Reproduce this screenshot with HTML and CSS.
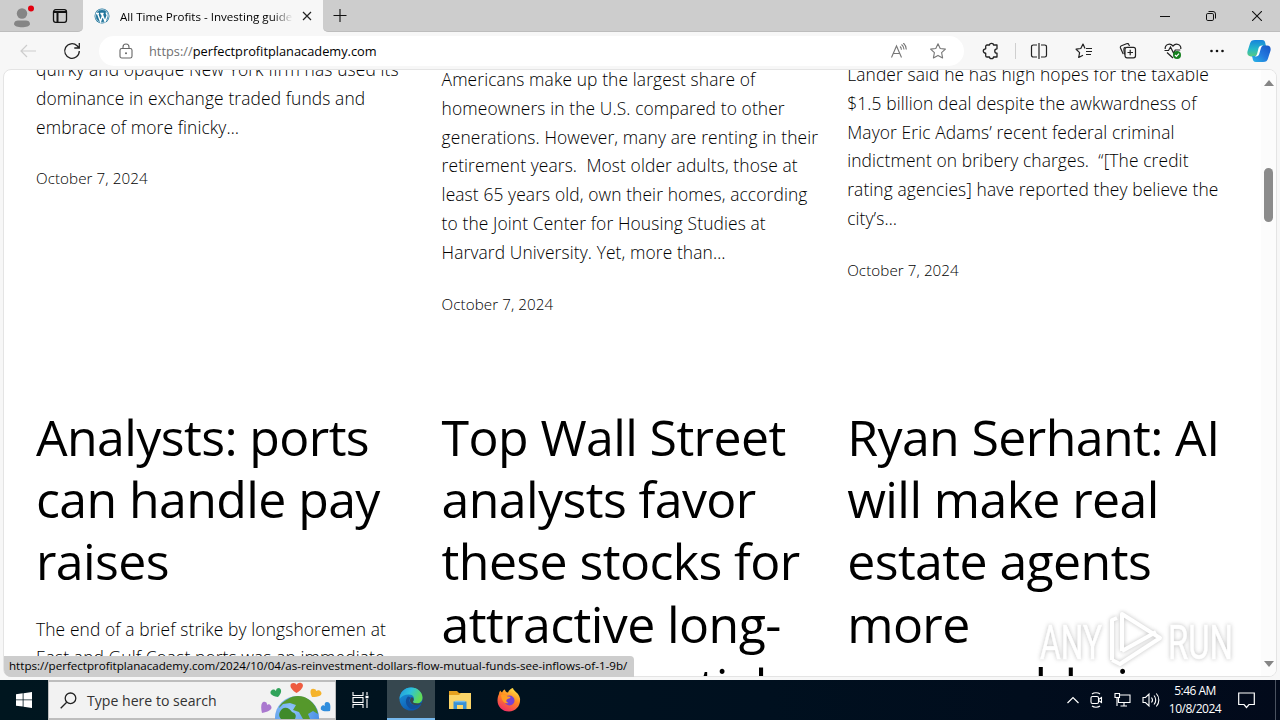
FILE: index.html
```html
<!DOCTYPE html>
<html lang="en">
<head>
  <meta charset="UTF-8">
  <meta name="viewport" content="width=device-width, initial-scale=1.0">
  <title>All Time Profits - Investing guide</title>
  <link rel="stylesheet" href="styles.css">
</head>
<body>
  <div class="desktop">
    <header class="titlebar">
      <div class="corner">
        <svg class="profile" width="24" height="28" viewBox="0 0 24 28">
          <circle cx="12" cy="11.500" r="5.200" fill="#858585"/>
          <path d="M4 22c0-2.500 2-3.500 4-3.500h8c2 0 4 1 4 3.500 0 2-4 3.300-8 3.300S4 24 4 22z" fill="#858585"/>
          <circle cx="21" cy="6.500" r="3" fill="#e3000f"/>
        </svg>
        <svg class="tabs-icon" width="16" height="16" viewBox="0 0 16 16" fill="none" stroke="#111" stroke-width="1.300">
          <rect x="1.500" y="1.700" width="13" height="12.600" rx="2.200"/>
          <path d="M1.500 4h13M5.500 4v10" stroke-width="2"/>
        </svg>
      </div>
      <div class="tab">
        <svg width="16" height="16" viewBox="0 0 16 16">
          <circle cx="8" cy="8" r="7.500" fill="#21759b"/>
          <circle cx="8" cy="8" r="6.500" fill="none" stroke="#d8e8f0" stroke-width=".7"/>
          <path d="M2 5.500h3M6.300 5.500h3.400M3.500 5.500l3 8 1.900-5.400-1-2.600M8 5.500l3 8 2-5.500c.5-1.500-.6-2.500-.9-3.500" fill="none" stroke="#fff" stroke-width="1.400"/>
        </svg>
        <span class="tab-title">All Time Profits - Investing guide</span>
        <svg class="tab-close" width="10" height="10" viewBox="0 0 10 10" stroke="#222" stroke-width="1.200"><path d="M1 1l8 8M9 1L1 9"/></svg>
      </div>
      <svg class="new-tab" width="14" height="14" viewBox="0 0 14 14" stroke="#111" stroke-width="1.200"><path d="M7 0v14M0 7h14"/></svg>
      <div class="window-buttons">
        <svg width="10" height="10" viewBox="0 0 10 10" stroke="#111"><path d="M0 5.500h10"/></svg>
        <svg width="10" height="10" viewBox="0 0 10 10" fill="none" stroke="#111"><rect x=".5" y="2.500" width="7" height="7" rx="1.300"/><path d="M2.500.5h4.500a2.500 2.500 0 0 1 2.500 2.500v4.500"/></svg>
        <svg width="10" height="10" viewBox="0 0 10 10" stroke="#111" stroke-width="1.100"><path d="M0 0l10 10M10 0L0 10"/></svg>
      </div>
    </header>

    <nav class="toolbar">
      <svg class="back" width="16" height="14" viewBox="0 0 16 14" fill="none" stroke="#cdcdcd" stroke-width="1.200"><path d="M16 7H1M7 1L1 7l6 6"/></svg>
      <svg class="reload" width="18" height="18" viewBox="0 0 18 18" fill="none" stroke="#222" stroke-width="1.300"><path d="M16.300 9a7.300 7.300 0 1 1-2.200-5.200L16 5.700M16.300 1v5h-5"/></svg>
      <div class="address">
        <svg class="lock" width="14" height="16" viewBox="0 0 14 16" fill="none" stroke="#666" stroke-width="1.100"><rect x="1" y="5.500" width="12" height="9.500" rx="1.800"/><path d="M4 5.500V4a3 3 0 0 1 6 0v1.500"/><circle cx="7" cy="10.200" r="1" fill="#666" stroke="none"/></svg>
        <span class="url"><span class="scheme">https://</span>perfectprofitplanacademy.com</span>
        <svg class="read" width="18" height="16" viewBox="0 0 18 16" fill="none" stroke="#777" stroke-width="1.100"><path d="M1.500 14.500L6.500 3l5 11.500M3.200 10.500h6.600M10 3.500c1 .8 1.400 2 1.400 3.300M11.500 1.500c1.600 1.200 2.500 3 2.500 5M13.300 0c2 1.700 3 4 3 6.500"/></svg>
        <svg class="star" width="18" height="18" viewBox="0 0 18 18" fill="none" stroke="#777" stroke-width="1.100" stroke-linejoin="round"><path d="M9 1.700l2.200 4.800 5.200.6-3.800 3.600 1 5.200L9 13.400l-4.600 2.500 1-5.200L1.600 7.100l5.200-.6z"/></svg>
      </div>
      <div class="tools">
        <svg class="puzzle" width="18" height="18" viewBox="0 0 18 18" fill="none" stroke="#222" stroke-width="1.300" stroke-linejoin="round"><path d="M5 3h2.500c0-2.300 4-2.300 4 0H15v3.800c-3 0-3 4.400 0 4.400V15h-3.500c0 2.200-4 2.200-4 0H5a1.300 1.300 0 0 1-1.300-1.300v-2.500c-3.200 0-3.200-4.400 0-4.400V4.300A1.300 1.300 0 0 1 5 3z"/></svg>
        <span class="divider"></span>
        <svg width="18" height="18" viewBox="0 0 18 18" fill="none" stroke="#222" stroke-width="1.200"><path d="M9 1v16M7 3H3.200A1.700 1.700 0 0 0 1.500 4.700v8.600A1.700 1.700 0 0 0 3.200 15H7M11 3h3.800a1.700 1.700 0 0 1 1.700 1.700v8.600a1.700 1.700 0 0 1-1.700 1.700H11"/></svg>
        <svg width="18" height="18" viewBox="0 0 18 18" fill="none" stroke="#222" stroke-width="1.200" stroke-linejoin="round"><path d="M10 6.500L8 2 5.800 6.500l-4.700.7 3.500 3.400-.9 4.900L8 13.200M11 6.500h6M11 9.500h6M11 12.500h5"/></svg>
        <svg width="18" height="18" viewBox="0 0 18 18" fill="none" stroke="#222" stroke-width="1.200"><path d="M4.200 12L1.500 6c-.4-1 0-1.900 1-2.300l5-2c1-.4 2 0 2.400 1L10.500 4"/><path d="M5.500 12.500l-.6-5C4.800 6 5.500 5.300 6.500 5.300"/><rect x="6" y="5.300" width="10.500" height="10.500" rx="2"/><path d="M11.200 7.800v5.500M8.500 10.500H14"/></svg>
        <svg width="18" height="18" viewBox="0 0 18 18" fill="none" stroke="#222" stroke-width="1.200"><path d="M1.200 7C.8 2.500 6 .5 9 4c3-3.500 8.300-1.500 7.800 3M3 10.500l6 5.500M.5 8.500h4L6.500 5l3 6 1.800-3h5"/><circle cx="13" cy="13" r="4" fill="#16801f" stroke="none"/><path d="M11 13l1.400 1.400 2.600-2.800" stroke="#fff"/></svg>
        <svg class="more" width="18" height="18" viewBox="0 0 18 18" fill="#111"><circle cx="3.500" cy="9" r="1.300"/><circle cx="9" cy="9" r="1.300"/><circle cx="14.500" cy="9" r="1.300"/></svg>
        <svg class="copilot" width="24" height="24" viewBox="0 0 24 24">
          <defs>
            <linearGradient id="cpA" x1="0" y1="0" x2="0" y2="1"><stop offset="0" stop-color="#1683dc"/><stop offset=".55" stop-color="#26b8c8"/><stop offset="1" stop-color="#58ca82"/></linearGradient>
            <linearGradient id="cpB" x1="1" y1="0" x2="0" y2="1"><stop offset="0" stop-color="#1554c6"/><stop offset=".5" stop-color="#2378dd"/><stop offset="1" stop-color="#28b8e7"/></linearGradient>
          </defs>
          <path d="M8 1h7c2.500 0 3 1.500 3.500 4l.5 2h-3c-2 0-2.800 1-3.300 3l-1.500 5c-.6 1.800-1.500 2.500-3.200 2.500H4C.8 17.500-.2 15 .6 12L3 4.500C3.700 2 5 1 8 1z" fill="url(#cpA)"/>
          <path d="M16 23H9c-2.500 0-3-1.500-3.500-4L5 17h3c2 0 2.800-1 3.300-3l1.500-5c.6-1.800 1.500-2.500 3.200-2.500h4c3.200 0 4.200 2.500 3.400 5.500L21 19.500c-.7 2.500-2 3.500-5 3.500z" fill="url(#cpB)"/>
          <path d="M11.500 9.200c.6-1.900 1.700-2.700 3.300-2.700h1.500c-1.500.4-2 1.500-2.500 3l-1.500 5.300c-.6 1.900-1.700 2.700-3.300 2.700H7.700c1.500-.4 2-1.500 2.500-3z" fill="#fff"/>
        </svg>
      </div>
    </nav>

    <main class="viewport">
      <section class="posts posts-top">
        <article class="post">
          <p>quirky and opaque New York firm has used its<br>dominance in exchange traded funds and<br>embrace of more finicky…</p>
          <time>October 7, 2024</time>
        </article>
        <article class="post post-mid">
          <p>Americans make up the largest share of<br>homeowners in the U.S. compared to other<br>generations. However, many are renting in their<br>retirement years. &nbsp;Most older adults, those at<br>least 65 years old, own their homes, according<br>to the Joint Center for Housing Studies at<br>Harvard University. Yet, more than…</p>
          <time>October 7, 2024</time>
        </article>
        <article class="post post-last">
          <p>Lander said he has high hopes for the taxable<br>$1.5 billion deal despite the awkwardness of<br>Mayor Eric Adams’ recent federal criminal<br>indictment on bribery charges. &nbsp;“[The credit<br>rating agencies] have reported they believe the<br>city’s…</p>
          <time>October 7, 2024</time>
        </article>
      </section>
      <section class="posts">
        <article class="post">
          <h2>Analysts: ports<br>can handle pay<br>raises</h2>
          <p>The end of a brief strike by longshoremen at<br>East and Gulf Coast ports was an immediate</p>
        </article>
        <article class="post">
          <h2>Top Wall Street<br>analysts favor<br>these stocks for<br>attractive long-<br>term potential</h2>
        </article>
        <article class="post">
          <h2>Ryan Serhant: AI<br>will make real<br>estate agents<br>more<br>personable in</h2>
        </article>
      </section>

      <div class="scrollbar">
        <svg width="10" height="6" viewBox="0 0 10 6"><path d="M5 0l5 6H0z" fill="#858585"/></svg>
        <span class="thumb"></span>
        <svg class="down" width="10" height="6" viewBox="0 0 10 6"><path d="M5 6l5-6H0z" fill="#858585"/></svg>
      </div>

      <svg class="watermark" width="200" height="66" viewBox="0 0 200 66">
        <g fill="#fff" stroke="#fff" stroke-width=".6" font-family="Roboto" font-size="49">
          <text x="3" y="53" textLength="62" lengthAdjust="spacingAndGlyphs">ANY</text>
          <text x="131" y="53" textLength="65" lengthAdjust="spacingAndGlyphs">RUN</text>
        </g>
        <path d="M75 54V14l5-2M85 45V8l38 24-40 26-8-4M85 45l34-19M85 8v28" fill="none" stroke="#fff" stroke-width="4" stroke-linejoin="round"/>
      </svg>
    </main>
    <div class="status">https://perfectprofitplanacademy.com/2024/10/04/as-reinvestment-dollars-flow-mutual-funds-see-inflows-of-1-9b/</div>

    <footer class="taskbar">
      <div class="start"><svg width="16" height="16" viewBox="0 0 16 16" fill="#fff"><path d="M0 2.200l6.700-.9v6.200H0zM7.500 1.200L16 0v7.500H7.500zM0 8.300h6.700v6.300L0 13.700zM7.500 8.300H16V16l-8.500-1.200z"/></svg></div>
      <div class="search">
        <svg width="17" height="17" viewBox="0 0 17 17" fill="none" stroke="#222" stroke-width="1.300"><circle cx="10.500" cy="6.300" r="5.300"/><path d="M6.700 10.200L.7 16.300"/></svg>
        <span>Type here to search</span>
        <svg class="doodle" width="74" height="38" viewBox="0 0 74 38">
          <defs><radialGradient id="sea" cx=".35" cy=".3" r=".8"><stop offset="0" stop-color="#8fc4fa"/><stop offset="1" stop-color="#3f86e0"/></radialGradient></defs>
          <circle cx="36" cy="37" r="22" fill="url(#sea)"/>
          <path d="M27 18c5-4 15-4 20 0 6 4 9 9 10 15l-5-3-5 3 2 5h-7l-4-7-6-2 3-5-6-2-7 1-4 4c1-4 5-7 9-9z" fill="#55982b"/>
          <path d="M21 28c4-3 8 0 10 3 3 1 5 3 3 7H20c-3-3-2-7 1-10z" fill="#3f8a2b"/>
          <path d="M35.500 12c-8-5-7-10-3-10 2 0 3 1 3 2 1-2 3-2.500 4.500-2 3.500 1 2.500 6-4.500 10z" fill="#ee5b40"/>
          <path d="M17 16c-8-1-9-5-6-7 2-1 3 0 4 1 0-2 1-3 3-3 3 1 3 5-1 9z" fill="#31a35a"/>
          <path d="M51 16c-3-6-1-9 2-8 2 0 2 1 2 2 2-1 4-1 5 1 2 3-2 5-9 5z" fill="#f5b32b"/>
          <path d="M1 32c-2-8 0-12 3-11 2 0 2 2 2 3 1-1 3-1 4 1 2 3-2 6-9 7z" fill="#aa78cf"/>
          <path d="M69 30c-8 1-10-1-9-4 1-2 3-2 4-1-1-2 0-4 2-4 3 0 4 3 3 9z" fill="#2f8ddd"/>
        </svg>
      </div>
      <div class="app app-view"><svg width="17" height="16" viewBox="0 0 17 16" fill="none" stroke="#fff" stroke-width="1.100"><path d="M1 0v3.500h10V0M1 16v-3.500h10V16M15 0v3M15 7v9"/><rect x="1" y="5.500" width="10" height="5"/><path d="M13.500 5h3" stroke-width="2.500"/></svg></div>
      <div class="app app-active">
        <svg width="24" height="24" viewBox="0 0 24 24">
          <defs>
            <linearGradient id="edA" x1="0" y1="0" x2="1" y2=".4"><stop offset="0" stop-color="#2195dc"/><stop offset=".5" stop-color="#2dc2dc"/><stop offset="1" stop-color="#61db55"/></linearGradient>
            <linearGradient id="edB" x1="0" y1="0" x2=".6" y2="1"><stop offset="0" stop-color="#1b9ce0"/><stop offset="1" stop-color="#0d55ae"/></linearGradient>
          </defs>
          <circle cx="12" cy="12" r="11.500" fill="url(#edB)"/>
          <path d="M.5 12C1 5 6 .5 12 .5c7 0 11.500 5 11.500 10 0 4-3 6-6 6-2.500 0-4-1-3.500-2 2.500-3.500 0-7-4-7-4.500 0-8 2-9.500 4.500z" fill="url(#edA)"/>
          <path d="M9 9.500c-4 4-2 10 3 12.500 4 0 8-2 9.500-5-4 2-9 1.500-10.500-1.500-1-2-.5-4 1-5z" fill="#124f9b"/>
          <path d="M13 10c-3 2-2.500 6 1 7.500 3 1.300 6 .5 8.500-1 1 .4 1 1 .6 1.800L25 14c-2 2-4 2.600-6.500 2.500-3 0-5-1-4.500-2 1-1.500 1-3-1-4.500z" fill="#36474f"/>
        </svg>
      </div>
      <div class="app">
        <svg width="22" height="20" viewBox="0 0 22 20"><path d="M0 1h8l2 2h12v5H0z" fill="#e5a11f"/><path d="M0 5h10l2-2h10v16H0z" fill="#fbd568"/><path d="M4.500 19v-7.500h13V19H14v-4H8v4z" fill="#3a91d5"/><path d="M6 11.500h10" stroke="#76bdf0" stroke-width="1.500"/></svg>
      </div>
      <div class="app">
        <svg width="24" height="24" viewBox="0 0 24 24">
          <defs><linearGradient id="fx" x1=".8" y1="0" x2=".3" y2="1"><stop offset="0" stop-color="#ffe84a"/><stop offset=".45" stop-color="#ff8b20"/><stop offset="1" stop-color="#f12c66"/></linearGradient></defs>
          <path d="M2 6c0-2 1-3 1.500-3.500.2 1 .8 1.500 1.500 2 1-2 2-3 3-3 0 1.500 1 3 3 3C12 2 14 .5 16 0c0 3 6 4.500 7 10.500.8 7-4 13-11 13S.5 18.500.5 12.500C.5 10 1 8 2 6z" fill="url(#fx)"/>
          <circle cx="12.500" cy="12.500" r="5" fill="#7542d3"/><path d="M4 7c3-1 5 0 6.500 1.500 1.500 0 3 .2 3 1-1 1.500-3 1-4 2.500-.7 1.500.5 2.500 2 3-4 1-7-2-7.500-8z" fill="#ff9d22"/>
        </svg>
      </div>
      <div class="tray">
        <svg width="12" height="16" viewBox="0 0 12 16" fill="none" stroke="#fff" stroke-width="1.200"><path d="M.5 11L6 5.500l5.500 5.500"/></svg>
        <svg width="13" height="16" viewBox="0 0 13 16" fill="none" stroke="#fff" stroke-width="1.100"><rect x="1" y="4.500" width="7.500" height="7" rx="1.500"/><path d="M8.500 7.500L11.500 5.500v5l-3-2M2 2c2-1.700 6-1.700 8 0M2 14c2 1.700 6 1.700 8 0"/></svg>
        <svg width="17" height="16" viewBox="0 0 17 16" fill="none" stroke="#fff" stroke-width="1.100"><path d="M6 3h10v7.500H4.500V6M10 10.500V14M6.500 14H13M1 1.500h4.500v4H1zM3 5.500V14"/></svg>
        <svg width="18" height="16" viewBox="0 0 18 16" fill="none" stroke="#fff" stroke-width="1.100"><path d="M1 5.500h2.500L7 2v12l-3.500-3.500H1zM9.500 5.500c1.200 1.500 1.200 3.500 0 5M12 3.500c2.300 2.500 2.300 6.500 0 9M14.300 1.500c3.400 3.700 3.400 9.300 0 13"/></svg>
      </div>
      <div class="clock"><span>5:46 AM</span><span>10/8/2024</span></div>
      <svg class="notify" width="17" height="17" viewBox="0 0 17 17" fill="none" stroke="#fff" stroke-width="1.200"><path d="M.7 1h15.600v11.500H11L8.500 15.500 6 12.500H.7z"/></svg>
      <span class="peek"></span>
    </footer>
  </div>
</body>
</html>
```

FILE: styles.css
```css
* {
  box-sizing: border-box;
}
body {
  margin: 0;
  font-family: "Open Sans", "Noto Sans", sans-serif;
  color: #000;
}
svg {
  display: block;
  flex-shrink: 0;
}
.desktop {
  position: relative;
  display: flex;
  flex-direction: column;
  width: 1280px;
  height: 720px;
  overflow: hidden;
  background: #f7f7f7;
}

/* tab strip */
.titlebar {
  display: flex;
  align-items: center;
  height: 32px;
  background: #f7f7f7;
}
.corner {
  display: flex;
  align-items: center;
  gap: 18px;
  width: 83px;
  height: 32px;
  padding-left: 10px;
  background: #cdcdcd;
  border-bottom: 1px solid #bdbdbd;
  border-radius: 0 0 5px 0;
}
.tab {
  display: flex;
  align-items: center;
  width: 240px;
  padding-left: 11px;
}
.tab-title {
  width: 173px;
  margin: 0 9px 0 10px;
  overflow: hidden;
  white-space: nowrap;
  font-size: 11.6px;
  -webkit-mask-image: linear-gradient(90deg, #000 88%, transparent);
  mask-image: linear-gradient(90deg, #000 88%, transparent);
}
.new-tab {
  width: 35px;
  height: 32px;
  padding: 9px 11px 9px 10px;
  background: #cdcdcd;
  border-radius: 0 0 0 5px;
  border-bottom: 1px solid #bdbdbd;
}
.window-buttons {
  display: flex;
  flex: 1;
  align-items: center;
  justify-content: flex-end;
  gap: 36px;
  height: 32px;
  padding-right: 18px;
  background: #cdcdcd;
  border-bottom: 1px solid #bdbdbd;
}

/* address bar */
.toolbar {
  display: flex;
  align-items: center;
  height: 38px;
}
.back {
  margin-left: 20px;
}
.reload {
  margin-left: 27px;
}
.address {
  display: flex;
  align-items: center;
  width: 865px;
  height: 30px;
  margin-left: 18px;
  padding-left: 20px;
  background: #fff;
  border-radius: 15px;
}
.url {
  width: 735px;
  margin-left: 16px;
  font-size: 12.8px;
  white-space: nowrap;
}
.scheme {
  color: #707070;
}
.read {
  margin-left: 6px;
}
.star {
  margin-left: 21px;
}
.tools {
  display: flex;
  flex: 1;
  align-items: center;
  gap: 26.5px;
  padding-left: 18px;
}
.puzzle {
  margin-right: -12px;
}
.divider {
  width: 1px;
  height: 16px;
  margin-right: -12px;
  background: #cfcfcf;
}
.copilot {
  margin-left: -6px;
}

/* page */
.viewport {
  position: relative;
  width: 1274px;
  height: 608px;
  margin: -1px 0 0 3px;
  overflow: hidden;
  background: #fff;
  border: 1px solid #e4e4e4;
  border-radius: 8px;
}
.posts {
  display: grid;
  grid-template-columns: repeat(3, 369px);
  gap: 36.6px;
  padding-left: 32px;
  white-space: nowrap;
}
.posts-top {
  height: 351px;
  margin-top: -15px;
}
.post-mid {
  padding-top: 10px;
}
.post-last {
  padding-top: 5px;
}
.post p {
  margin: 0;
  font-size: 17.4px;
  font-weight: 330;
  line-height: 28.8px;
  letter-spacing: 0.11px;
}
.post time {
  display: block;
  margin-top: 24px;
  font-size: 15.2px;
  font-weight: 330;
  line-height: 26px;
  letter-spacing: 0.07px;
}
.post h2 {
  margin: 0 0 22px;
  font-size: 50px;
  font-weight: 400;
  line-height: 62.2px;
  letter-spacing: -0.6px;
}
.scrollbar {
  position: absolute;
  top: 0;
  right: 0;
  display: flex;
  flex-direction: column;
  align-items: center;
  width: 15px;
  height: 606px;
  padding: 10px 0 9px;
  background: #fcfcfc;
}
.thumb {
  width: 9px;
  height: 54px;
  margin-top: 82px;
  background: #8b8b8b;
  border-radius: 5px;
}
.down {
  margin-top: auto;
}
.watermark {
  position: absolute;
  right: 39px;
  bottom: 4px;
  opacity: 0.75;
  filter: drop-shadow(0 0 2px #aaa);
}
.status {
  position: absolute;
  left: 4px;
  top: 656px;
  width: 630px;
  height: 21px;
  padding-left: 5px;
  background: #cdcdcd;
  border-radius: 0 4px 0 7px;
  font-size: 11.6px;
  line-height: 19px;
  white-space: nowrap;
}

/* taskbar */
.taskbar {
  display: flex;
  align-items: center;
  height: 40px;
  margin-top: auto;
  background: linear-gradient(90deg, #00161f, #00101f 60%, #020a1b);
  color: #fff;
}
.start {
  display: flex;
  justify-content: center;
  width: 48px;
}
.search {
  display: flex;
  align-items: center;
  width: 288px;
  height: 40px;
  padding-left: 11px;
  background: #f2f2f2;
  border: 1px solid #bdbdbd;
  border-width: 2px 1px;
  color: #333;
  font-size: 14.1px;
}
.search span {
  width: 130px;
  margin-left: 10px;
  white-space: nowrap;
}
.doodle {
  margin-left: 44px;
}
.app {
  display: flex;
  align-items: center;
  justify-content: center;
  width: 49px;
  height: 40px;
}
.app-view {
  width: 51px;
  padding-right: 3px;
}
.app-active {
  width: 48px;
  background: #36474f;
  border-bottom: 2px solid #76b9ed;
}
.tray {
  display: flex;
  align-items: center;
  gap: 11px;
  margin-left: auto;
}
.clock {
  display: flex;
  flex-direction: column;
  align-items: center;
  width: 70px;
  font-size: 12px;
  line-height: 18px;
  letter-spacing: -0.5px;
}
.notify {
  margin: 0 20px 0 8px;
}
.peek {
  width: 1px;
  height: 40px;
  margin-right: 4px;
  background: #4a5260;
}
```
